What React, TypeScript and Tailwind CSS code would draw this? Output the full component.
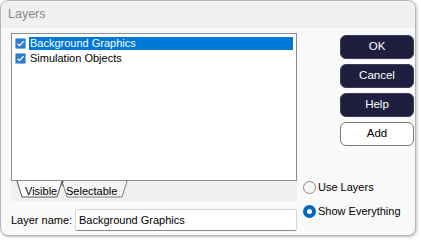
import React from 'react';

const font = { fontFamily: '"Liberation Sans", Arial, sans-serif' };

function Check() {
  return (
    <svg width="11" height="11" viewBox="0 0 11 11" className="shrink-0">
      <rect x="0.5" y="0.5" width="10" height="10" rx="1" fill="#2a7dd1" stroke="#7fb3e6" />
      <path d="M2.5 5.6 L4.5 7.6 L8.6 3.2" fill="none" stroke="#fff" strokeWidth="1.3" />
    </svg>
  );
}

function Radio({ on }: { on?: boolean }) {
  return on ? (
    <span className="w-[13px] h-[13px] rounded-full bg-[#0067c0] flex items-center justify-center shrink-0">
      <span className="w-[5px] h-[5px] rounded-full bg-white" />
    </span>
  ) : (
    <span className="w-[13px] h-[13px] rounded-full border border-[#8a8a8a] bg-[#f6f6f6] shrink-0" />
  );
}

function DarkButton({ label }: { label: string }) {
  return (
    <button className="w-[74px] h-[24px] rounded-[6px] bg-[#1e1f3f] border border-[#3a3b55] text-white text-[11.5px]">
      {label}
    </button>
  );
}

export default function App() {
  return (
    <div className="w-[421px] h-[240px] bg-white" style={font}>
      <div className="w-[416px] h-[236px] rounded-[8px] border border-[#b5b5b5] bg-[#f9f9f9] flex flex-col overflow-hidden shadow-[1px_1px_3px_rgba(0,0,0,0.25)]">
        {/* Title */}
        <div className="h-[27px] bg-[#f0f0f0] pl-[7px] flex items-center text-[12.5px] text-[#8a8a8a] shrink-0">
          Layers
        </div>

        <div className="flex flex-1">
          {/* Left side */}
          <div className="w-[296px] pl-[10px] pt-[5px] flex flex-col">
            <div className="h-[148px] bg-white border border-[#8d8d8d] p-[3px] flex flex-col text-[11px] text-black">
              <div className="h-[13px] flex items-center gap-[3px]">
                <Check />
                <span className="flex-1 h-[13px] bg-[#0078d7] text-white leading-[13px] pl-[1px]">Background Graphics</span>
              </div>
              <div className="h-[14px] flex items-center gap-[3px] mt-[1px]">
                <Check />
                <span className="leading-[14px] pl-[1px]">Simulation Objects</span>
              </div>
            </div>

            {/* Tabs */}
            <div className="relative h-[20px] bg-[#f0f0f0] text-[11px] text-black">
              <svg width="285" height="20" className="absolute left-0 top-0">
                <path d="M51 0 L56 16 L111 16 L116 0" fill="#f4f4f4" stroke="#808080" />
                <path d="M6 0 L11 16 L46 16 L51 0" fill="#fafafa" stroke="#555" />
                <path d="M52.5 0 Q50 2 51.5 5" fill="none" stroke="#555" />
              </svg>
              <span className="absolute left-[14px] top-[2px]">Visible</span>
              <span className="absolute left-[55px] top-[2px]">Selectable</span>
            </div>

            <div className="flex items-center mt-[8px]">
              <span className="text-[11px] text-black w-[64px] whitespace-nowrap">Layer name:</span>
              <div className="flex-1 h-[22px] bg-white border border-[#d6d6d6] border-b-[#8a8a8a] rounded-[2px] pl-[3px] flex items-center text-[11px] text-black">
                Background Graphics
              </div>
            </div>
          </div>

          {/* Right side */}
          <div className="flex-1 flex flex-col items-end pr-[1px]">
            <div className="flex flex-col gap-[5px] pt-[7px]">
              <DarkButton label="OK" />
              <DarkButton label="Cancel" />
              <DarkButton label="Help" />
              <button className="w-[74px] h-[24px] rounded-[6px] bg-white border border-[#7a7a7a] text-black text-[11.5px]">
                Add
              </button>
            </div>
            <div className="self-stretch pl-[6px] mt-[35px] flex flex-col gap-[11px] text-[11px] text-black">
              <div className="flex items-center gap-[2px] h-[13px]">
                <Radio />
                <span>Use Layers</span>
              </div>
              <div className="flex items-center gap-[2px] h-[13px]">
                <Radio on />
                <span>Show Everything</span>
              </div>
            </div>
          </div>
        </div>
      </div>
    </div>
  );
}
